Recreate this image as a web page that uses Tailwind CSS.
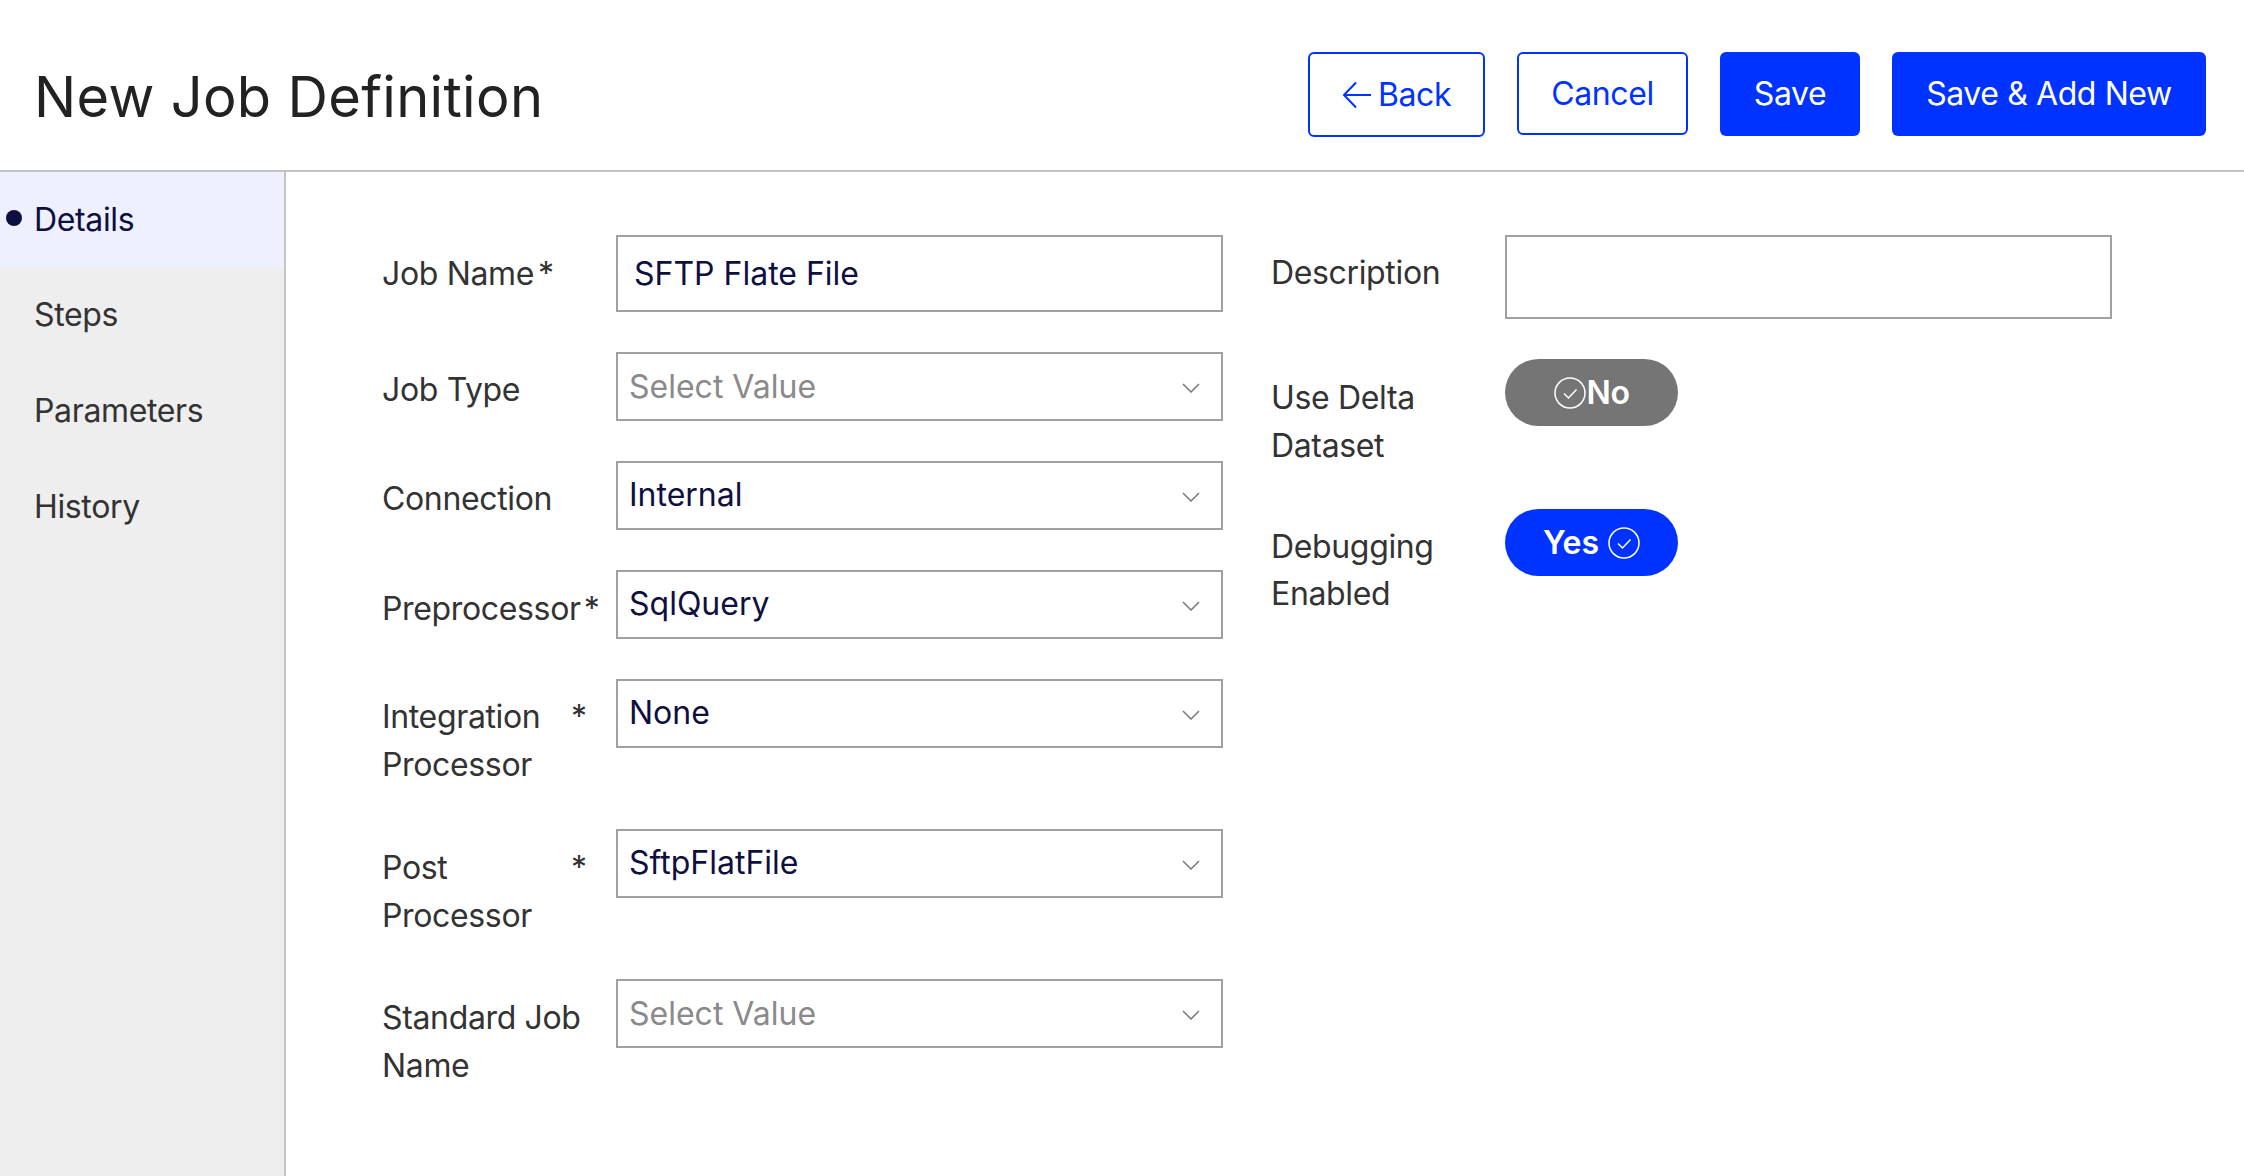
<!DOCTYPE html>
<html>
<head>
<meta charset="utf-8">
<script src="https://cdn.jsdelivr.net/npm/@tailwindcss/browser@4"></script>
</head>
<body class="m-0 bg-white font-['Inter',sans-serif] text-[32px] leading-[48px] text-[#333] overflow-hidden">
<div class="flex flex-col w-[2244px] h-[1176px]">
  <header class="flex items-start justify-between h-[172px] border-b-2 border-[#c4c4c4] pl-[34px] pr-[38px] shrink-0">
    <h1 class="text-[56px] leading-[84px] mt-[55px] font-normal text-[#222] tracking-[0.32px]">New Job Definition</h1>
    <div class="flex items-start gap-[32px] mt-[52px] text-[32px] tracking-[-0.4px]">
      <button class="flex items-center justify-center w-[177px] h-[85px] border-2 border-[#0033ff] rounded-[6px] text-[#0033ff] bg-white">
        <svg class="w-[30px] h-[28px] mr-[6px]" viewBox="0 0 30 28" fill="none" stroke="#0033ff" stroke-width="2"><path d="M29 14H3M14 1.5 2 14l12 12.5"/></svg>Back
      </button>
      <button class="flex items-center justify-center w-[171px] h-[83px] border-2 border-[#0033ff] rounded-[6px] text-[#0033ff] bg-white">Cancel</button>
      <button class="flex items-center justify-center w-[140px] h-[84px] rounded-[6px] bg-[#0033ff] text-white">Save</button>
      <button class="flex items-center justify-center w-[314px] h-[84px] rounded-[6px] bg-[#0033ff] text-white">Save &amp; Add New</button>
    </div>
  </header>
  <div class="flex flex-1 min-h-0 tracking-[-0.35px]">
    <nav class="w-[286px] shrink-0 bg-[#eeeeee] border-r-2 border-[#c4c4c4]">
      <div class="relative h-[95px] bg-[#eef0fe] pl-[34px] flex items-center text-[#0f0f3f]">
        <span class="absolute left-[6px] top-[38px] w-[16px] h-[16px] rounded-full bg-[#0f0f3f]"></span>Details
      </div>
      <div class="h-[96px] pl-[34px] flex items-center text-[#333]">Steps</div>
      <div class="h-[96px] pl-[34px] flex items-center text-[#333]">Parameters</div>
      <div class="h-[96px] pl-[34px] flex items-center text-[#333]">History</div>
    </nav>
    <main class="flex items-start gap-[48px] pl-[96px] pt-[63px]">
      <div class="flex flex-col w-[841px]">
        <div class="flex mb-[40px]">
          <label class="flex w-[234px] pt-[15px] h-[62px] shrink-0"><span>Job Name</span><span class="ml-[4px]">*</span></label>
          <div class="w-[607px] h-[77px] border-2 border-[#a0a0a0] flex items-center pl-[16px] text-[#0f0f3f] tracking-normal">SFTP Flate File</div>
        </div>
        <div class="flex mb-[40px]">
          <label class="flex w-[234px] pt-[14px] shrink-0"><span>Job Type</span></label>
          <div class="relative w-[607px] h-[69px] border-2 border-[#a0a0a0] flex items-center pl-[11px] text-[#8a8a8a] tracking-normal">Select Value
            <svg class="absolute left-[564px] top-[29px] w-[18px] h-[10px]" viewBox="0 0 18 10" fill="none" stroke="#777" stroke-width="1.5"><path d="M1 1l8 8 8-8"/></svg>
          </div>
        </div>
        <div class="flex mb-[40px]">
          <label class="flex w-[234px] pt-[14px] shrink-0"><span>Connection</span></label>
          <div class="relative w-[607px] h-[69px] border-2 border-[#a0a0a0] flex items-center pl-[11px] pb-[1px] text-[#0f0f3f] tracking-normal">Internal
            <svg class="absolute left-[564px] top-[29px] w-[18px] h-[10px]" viewBox="0 0 18 10" fill="none" stroke="#777" stroke-width="1.5"><path d="M1 1l8 8 8-8"/></svg>
          </div>
        </div>
        <div class="flex mb-[40px]">
          <label class="flex w-[234px] pt-[15px] shrink-0"><span>Preprocessor</span><span class="ml-[3px]">*</span></label>
          <div class="relative w-[607px] h-[69px] border-2 border-[#a0a0a0] flex items-center pl-[11px] pb-[1px] text-[#0f0f3f] tracking-normal">SqlQuery
            <svg class="absolute left-[564px] top-[29px] w-[18px] h-[10px]" viewBox="0 0 18 10" fill="none" stroke="#777" stroke-width="1.5"><path d="M1 1l8 8 8-8"/></svg>
          </div>
        </div>
        <div class="flex mb-[40px]">
          <label class="flex w-[234px] h-[110px] pt-[14px] shrink-0"><span class="w-[185px]">Integration Processor</span><span class="ml-[4px]">*</span></label>
          <div class="relative w-[607px] h-[69px] border-2 border-[#a0a0a0] flex items-center pl-[11px] pb-[1px] text-[#0f0f3f] tracking-normal">None
            <svg class="absolute left-[564px] top-[29px] w-[18px] h-[10px]" viewBox="0 0 18 10" fill="none" stroke="#777" stroke-width="1.5"><path d="M1 1l8 8 8-8"/></svg>
          </div>
        </div>
        <div class="flex mb-[40px]">
          <label class="flex w-[234px] h-[110px] pt-[15px] shrink-0"><span class="w-[185px]">Post Processor</span><span class="ml-[4px]">*</span></label>
          <div class="relative w-[607px] h-[69px] border-2 border-[#a0a0a0] flex items-center pl-[11px] pb-[1px] text-[#0f0f3f] tracking-normal">SftpFlatFile
            <svg class="absolute left-[564px] top-[29px] w-[18px] h-[10px]" viewBox="0 0 18 10" fill="none" stroke="#777" stroke-width="1.5"><path d="M1 1l8 8 8-8"/></svg>
          </div>
        </div>
        <div class="flex">
          <label class="flex w-[234px] h-[110px] pt-[15px] pr-[20px] shrink-0"><span>Standard Job Name</span></label>
          <div class="relative w-[607px] h-[69px] border-2 border-[#a0a0a0] flex items-center pl-[11px] text-[#8a8a8a] tracking-normal">Select Value
            <svg class="absolute left-[564px] top-[29px] w-[18px] h-[10px]" viewBox="0 0 18 10" fill="none" stroke="#777" stroke-width="1.5"><path d="M1 1l8 8 8-8"/></svg>
          </div>
        </div>
      </div>
      <div class="flex flex-col w-[841px]">
        <div class="flex mb-[40px]">
          <label class="w-[234px] pt-[14px] shrink-0">Description</label>
          <div class="w-[607px] h-[84px] border-2 border-[#a0a0a0]"></div>
        </div>
        <div class="flex mb-[40px]">
          <label class="w-[234px] h-[110px] pt-[15px] shrink-0 pr-[30px]">Use Delta Dataset</label>
          <div class="flex items-center justify-center gap-[1px] w-[173px] h-[67px] rounded-full bg-[#757575] text-white font-semibold tracking-[-0.4px]">
            <svg class="w-[32px] h-[32px]" viewBox="0 0 32 32" fill="none" stroke="#fff" stroke-width="1.5"><circle cx="16" cy="16" r="15"/><path d="M10 16.5l4.5 4.5 8-8.5"/></svg>No
          </div>
        </div>
        <div class="flex">
          <label class="w-[234px] pt-[14px] leading-[47px] shrink-0 pr-[30px]">Debugging Enabled</label>
          <div class="flex items-center justify-center gap-[9px] w-[173px] h-[67px] rounded-full bg-[#0033ff] text-white font-semibold tracking-normal">Yes
            <svg class="w-[32px] h-[32px]" viewBox="0 0 32 32" fill="none" stroke="#fff" stroke-width="1.5"><circle cx="16" cy="16" r="15"/><path d="M10 16.5l4.5 4.5 8-8.5"/></svg>
          </div>
        </div>
      </div>
    </main>
  </div>
</div>
</body>
</html>
